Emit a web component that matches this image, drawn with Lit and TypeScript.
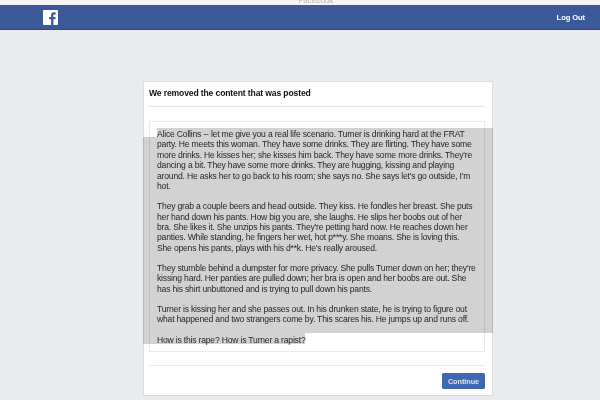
import { LitElement, html, css } from 'lit';
import { customElement } from 'lit/decorators.js';

const PARAGRAPHS = [
  [
    'Alice Collins -- let me give you a real life scenario. Turner is drinking hard at the FRAT',
    'party. He meets this woman. They have some drinks. They are flirting. They have some',
    "more drinks. He kisses her; she kisses him back. They have some more drinks. They're",
    'dancing a bit. They have some more drinks. They are hugging, kissing and playing',
    "around. He asks her to go back to his room; she says no. She says let's go outside, I'm",
    'hot.',
  ],
  [
    'They grab a couple beers and head outside. They kiss. He fondles her breast. She puts',
    'her hand down his pants. How big you are, she laughs. He slips her boobs out of her',
    "bra. She likes it. She unzips his pants. They're petting hard now. He reaches down her",
    'panties. While standing, he fingers her wet, hot p***y. She moans. She is loving this.',
    "She opens his pants, plays with his d**k. He's really aroused.",
  ],
  [
    "They stumble behind a dumpster for more privacy. She pulls Turner down on her; they're",
    'kissing hard. Her panties are pulled down; her bra is open and her boobs are out. She',
    'has his shirt unbuttoned and is trying to pull down his pants.',
  ],
  [
    'Turner is kissing her and she passes out. In his drunken state, he is trying to figure out',
    'what happened and two strangers come by. This scares his. He jumps up and runs off.',
  ],
  ['How is this rape? How is Turner a rapist?'],
];

@customElement('app-root')
export class AppRoot extends LitElement {
  static styles = css`
    :host {
      display: block;
      height: 400px;
      overflow: hidden;
      background: #e9ebee;
      font-family: 'Liberation Sans', Arial, sans-serif;
      color: #1d2129;
    }

    .strip {
      height: 5px;
      box-sizing: border-box;
      padding-left: 32px;
      background: #f6f6f6;
      overflow: hidden;
      text-align: center;
      font-size: 8px;
      line-height: 1px;
      color: #b5b5b5;
    }

    .bar {
      height: 25px;
      box-sizing: border-box;
      background: #3b5998;
      border-bottom: 1px solid #2f4a85;
      display: flex;
      align-items: center;
      justify-content: space-between;
      padding: 0 15px 0 43px;
    }

    .logo {
      display: block;
      width: 15px;
      height: 15px;
    }

    .logout {
      color: #fff;
      font-size: 7.6px;
      font-weight: 700;
      letter-spacing: -0.1px;
    }

    .card {
      position: relative;
      box-sizing: border-box;
      width: 350px;
      height: 315px;
      margin: 51px 0 0 143px;
      padding: 0 7px 0 5px;
      background: #fff;
      border: 1px solid #dddfe2;
      border-bottom-color: #d3d5d9;
    }

    .title {
      height: 24px;
      line-height: 23px;
      font-size: 8.6px;
      font-weight: 700;
      letter-spacing: -0.14px;
      color: #111;
      border-bottom: 1px solid #e5e5e5;
    }

    .post {
      height: 231px;
      box-sizing: border-box;
      margin-top: 14px;
      padding: 7px 0 0 7px;
      border: 1px solid #e9e9e9;
      font-size: 8.6px;
      letter-spacing: -0.2px;
      line-height: 10.4px;
      color: #2e2e2e;
    }

    .para {
      margin-bottom: 9.8px;
    }

    .line {
      white-space: nowrap;
    }

    .foot {
      margin-top: 13px;
      padding-top: 7px;
      border-top: 1px solid #e9e9e9;
      display: flex;
      justify-content: flex-end;
    }

    .continue {
      box-sizing: border-box;
      width: 43px;
      height: 16px;
      padding: 0;
      border: 0;
      border-radius: 1.5px;
      background: #4267b2;
      color: #dfe6f3;
      font: 700 7.2px 'Liberation Sans', Arial, sans-serif;
    }

    .selection {
      position: absolute;
      left: -1px;
      top: 46px;
      width: 350px;
      height: 216px;
      background: #d2d2d2;
      mix-blend-mode: multiply;
      pointer-events: none;
      clip-path: polygon(
        14px 0,
        350px 0,
        350px 205px,
        162px 205px,
        162px 216px,
        0 216px,
        0 9px,
        14px 9px
      );
    }
  `;

  render() {
    return html`
      <div class="strip">Facebook</div>
      <header class="bar">
        <svg class="logo" viewBox="0 0 15 15">
          <rect width="15" height="15" rx="0.8" fill="#fff"></rect>
          <path
            fill="#3b5998"
            d="M10.4 15V9.2h1.95l.3-2.25H10.4V5.5c0-.65.18-1.1 1.12-1.1h1.2V2.38a16 16 0 0 0-1.75-.09c-1.73 0-2.92 1.06-2.92 3v1.66H6.1V9.2h1.95V15z"
          ></path>
        </svg>
        <span class="logout">Log Out</span>
      </header>
      <main class="card">
        <div class="title">We removed the content that was posted</div>
        <div class="post">
          ${PARAGRAPHS.map(
            (lines) => html`<div class="para">
              ${lines.map((line) => html`<div class="line">${line}</div>`)}
            </div>`
          )}
        </div>
        <div class="foot"><button class="continue">Continue</button></div>
        <div class="selection"></div>
      </main>
    `;
  }
}
